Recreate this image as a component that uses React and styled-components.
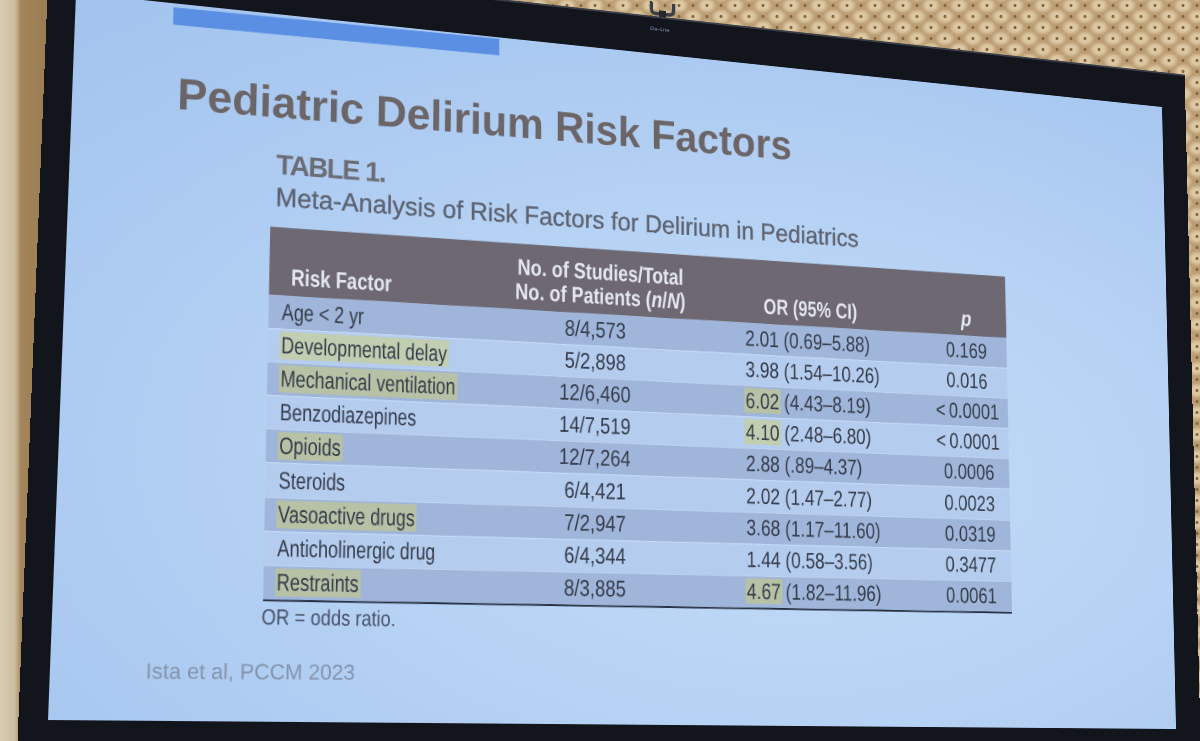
import React from "react";
import styled, { createGlobalStyle } from "styled-components";

// the slide is laid out flat (1260x720) and then projected onto the photo plane
const SLIDE_W = 1260;
const SLIDE_H = 720;
const PROJECTION =
  "matrix3d(1.018111, 0.104857, 0, 0.000134428, -0.041511, 0.970389, 0, -0.0000546333, 0, 0, 1, 0, 76, -7, 0, 1)";
const MARK = "rgba(214, 210, 96, 0.42)";

const GlobalStyle = createGlobalStyle`
  html, body {
    margin: 0;
    width: 1200px;
    height: 741px;
    overflow: hidden;
  }
  body {
    font-family: "Liberation Sans", Arial, sans-serif;
    background-color: #bb9d74;
    background-image:
      linear-gradient(90deg, #d9ccb1 0, #cdbd9e 15px, #a3845b 21px, #96794f 60px, transparent 60px),
      radial-gradient(circle, #86673f 0 1.1px, transparent 1.9px),
      radial-gradient(ellipse 10px 8px, rgba(228, 210, 174, 0.8) 0 50%, transparent 100%),
      radial-gradient(ellipse 10px 8px, rgba(228, 210, 174, 0.8) 0 50%, transparent 100%);
    background-size: 100% 100%, 14px 11px, 28px 22px, 28px 22px;
    background-position: 0 0, 0 0, 7px 5.5px, 21px 16.5px;
    background-repeat: no-repeat, repeat, repeat, repeat;
  }
`;

const Stage = styled.div`
  width: 1200px;
  height: 741px;
`;

const Screen = styled.div`
  width: ${SLIDE_W + 60}px;
  display: flex;
  flex-direction: column;
  transform-origin: 0 0;
  transform: ${PROJECTION} translate(-28px, -58px);
`;

const HangerRow = styled.div`
  height: 16px;
  display: flex;
  padding-left: 639px;
`;

const Frame = styled.div`
  background: #12151c;
  border-top: 2px solid #3a3e47;
  padding: 0 32px 45px 28px;
`;

const TopBar = styled.div`
  height: 40px;
  display: flex;
  align-items: flex-start;
  padding: 9px 0 0 617px;
  box-sizing: border-box;
`;

const Brand = styled.span`
  font-size: 6px;
  line-height: 6px;
  color: #8ea3d6;
  letter-spacing: 0.5px;
`;

const Surface = styled.div`
  width: ${SLIDE_W}px;
  height: ${SLIDE_H}px;
  overflow: hidden;
  background: radial-gradient(ellipse 90% 85% at 62% 62%, #c4dcf7 0%, #b6d2f4 45%, #a2c3ee 100%);
`;

const Slide = styled.div`
  height: 100%;
  display: flex;
  flex-direction: column;
  align-items: flex-start;
  transform: rotate(-0.45deg);
`;

const AccentBar = styled.div`
  width: 347px;
  height: 18px;
  margin-left: 101px;
  background: #5a8fe4;
`;

const Title = styled.h1`
  margin: 48px 0 0 107px;
  font-size: 46px;
  line-height: 46px;
  font-weight: 700;
  color: #6b6567;
  white-space: nowrap;
`;

const TableBlock = styled.div`
  margin-left: 205px;
  display: flex;
  flex-direction: column;
  align-items: flex-start;
`;

const TableLabel = styled.div`
  margin: 28px 0 0 5px;
  font-size: 29px;
  line-height: 29px;
  font-weight: 700;
  letter-spacing: -1.5px;
  color: #6c6c75;
`;

const Caption = styled.div`
  margin: 6px 0 0 5px;
  font-size: 27px;
  line-height: 27px;
  color: #5d6270;
  -webkit-text-stroke: 0.35px #5d6270;
  white-space: nowrap;
`;

const Table = styled.div`
  margin-top: 17px;
  width: 845px;
  border-bottom: 2.5px solid #273042;
`;

const Row = styled.div`
  display: grid;
  grid-template-columns: 255px 195px 295px 100px;
`;

const HeadRow = styled(Row)`
  box-sizing: border-box;
  height: 70px;
  padding-bottom: 6px;
  align-items: end;
  background: #6e6872;
  color: #e4e7ef;
  font-size: 24px;
  line-height: 26px;
  font-weight: 700;
`;

const BodyRow = styled(Row)`
  box-sizing: border-box;
  height: 34.1px;
  padding-bottom: 1px;
  align-items: center;
  background: ${(p) => (p.$dark ? "#9fb5d9" : "#b4ccee")};
  color: #353c4a;
  font-size: 24px;
  line-height: 28px;

  & + & {
    border-top: 1.5px solid rgba(206, 225, 248, 0.75);
  }
`;

const Cell = styled.div`
  display: flex;
  justify-content: ${(p) => (p.$align === "center" ? "center" : "flex-start")};
  padding-left: ${(p) => p.$pad || 0}px;
  min-width: 0;
`;

const Txt = styled.span`
  display: inline-block;
  white-space: nowrap;
  padding: 0 3px 0 2px;
  text-align: ${(p) => (p.$origin === "center" ? "center" : "left")};
  background: ${(p) => (p.$mark ? MARK : "transparent")};
  transform: scaleX(${(p) => p.$x});
  transform-origin: ${(p) => p.$origin || "left"} center;
`;

const Mark = styled.span`
  background: ${MARK};
  padding: 0 2px;
  margin: 0 -2px;
`;

const Footnote = styled.div`
  margin: 5px 0 0 -3px;
  font-size: 22px;
  line-height: 22px;
  color: #485168;
`;

const Citation = styled.div`
  margin: 32px 0 0 90px;
  font-size: 21.5px;
  line-height: 22px;
  color: #8393ab;
  white-space: nowrap;
`;

const ROWS = [
  { factor: "Age < 2 yr", studies: "8/4,573", or: "2.01", ci: "(0.69–5.88)", p: "0.169" },
  { factor: "Developmental delay", mark: true, studies: "5/2,898", or: "3.98", ci: "(1.54–10.26)", p: "0.016" },
  { factor: "Mechanical ventilation", mark: true, studies: "12/6,460", or: "6.02", orMark: true, ci: "(4.43–8.19)", p: "<\u20090.0001" },
  { factor: "Benzodiazepines", studies: "14/7,519", or: "4.10", orMark: true, ci: "(2.48–6.80)", p: "<\u20090.0001" },
  { factor: "Opioids", mark: true, studies: "12/7,264", or: "2.88", ci: "(.89–4.37)", p: "0.0006" },
  { factor: "Steroids", studies: "6/4,421", or: "2.02", ci: "(1.47–2.77)", p: "0.0023" },
  { factor: "Vasoactive drugs", mark: true, studies: "7/2,947", or: "3.68", ci: "(1.17–11.60)", p: "0.0319" },
  { factor: "Anticholinergic drug", studies: "6/4,344", or: "1.44", ci: "(0.58–3.56)", p: "0.3477" },
  { factor: "Restraints", mark: true, studies: "8/3,885", or: "4.67", orMark: true, ci: "(1.82–11.96)", p: "0.0061" },
];

function Hanger() {
  return (
    <svg width="40" height="16" viewBox="0 0 40 16">
      <path d="M7 0 V8 Q7 13 12 13 H28 Q33 13 33 8 V0" fill="none" stroke="#3c3e44" strokeWidth="4" />
      <rect x="16" y="9" width="8" height="7" fill="#25272c" />
    </svg>
  );
}

export default function App() {
  return (
    <Stage>
      <GlobalStyle />
      <Screen>
        <HangerRow>
          <Hanger />
        </HangerRow>
        <Frame>
          <TopBar>
            <Brand>Da-Lite</Brand>
          </TopBar>
          <Surface>
            <Slide>
              <AccentBar />
              <Title>Pediatric Delirium Risk Factors</Title>
              <TableBlock>
                <TableLabel>TABLE 1.</TableLabel>
                <Caption>Meta-Analysis of Risk Factors for Delirium in Pediatrics</Caption>
                <Table>
                  <HeadRow>
                    <Cell $pad={21}>
                      <Txt $x={0.81}>Risk Factor</Txt>
                    </Cell>
                    <Cell $align="center" $pad={13}>
                      <Txt $x={0.84} $origin="center">
                        No. of Studies/Total
                        <br />
                        No. of Patients (<i>n</i>/<i>N</i>)
                      </Txt>
                    </Cell>
                    <Cell $pad={95}>
                      <Txt $x={0.82}>OR (95% CI)</Txt>
                    </Cell>
                    <Cell $align="center">
                      <Txt $x={0.9} $origin="center">
                        <i>p</i>
                      </Txt>
                    </Cell>
                  </HeadRow>
                  {ROWS.map((r, i) => (
                    <BodyRow key={r.factor} $dark={i % 2 === 0}>
                      <Cell $pad={12}>
                        <Txt $x={0.78} $mark={r.mark}>
                          {r.factor}
                        </Txt>
                      </Cell>
                      <Cell $align="center">
                        <Txt $x={0.86} $origin="center">
                          {r.studies}
                        </Txt>
                      </Cell>
                      <Cell $pad={73}>
                        <Txt $x={0.85}>
                          {r.orMark ? <Mark>{r.or}</Mark> : r.or} {r.ci}
                        </Txt>
                      </Cell>
                      <Cell $align="center">
                        <Txt $x={0.86} $origin="center">
                          {r.p}
                        </Txt>
                      </Cell>
                    </BodyRow>
                  ))}
                </Table>
                <Footnote>
                  <Txt $x={0.86}>OR = odds ratio.</Txt>
                </Footnote>
              </TableBlock>
              <Citation>Ista et al, PCCM 2023</Citation>
            </Slide>
          </Surface>
        </Frame>
      </Screen>
    </Stage>
  );
}
